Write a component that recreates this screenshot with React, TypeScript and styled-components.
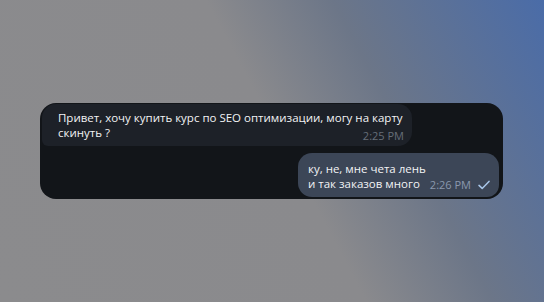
import React from 'react';
import styled, {createGlobalStyle} from 'styled-components';

const GlobalStyle = createGlobalStyle`
  html, body, #root {
    margin: 0;
    padding: 0;
    width: 100%;
    height: 100%;
  }
  body {
    font-family: 'Open Sans', 'Noto Sans', sans-serif;
    overflow: hidden;
  }
`;

const Page = styled.div`
  width: 544px;
  height: 302px;
  display: flex;
  align-items: center;
  padding-left: 40px;
  box-sizing: border-box;
  background: linear-gradient(62deg, #8b8b8d 0%, #8a8a8d 52%, #6c7688 70%, #4a6ca8 100%);
`;

const Chat = styled.div`
  width: 463px;
  box-sizing: border-box;
  display: flex;
  flex-direction: column;
  gap: 7px;
  padding: 1px 4px 2px 2px;
  background: #121519;
  border-radius: 16px;
`;

const Bubble = styled.div<{$out?: boolean}>`
  align-self: ${(p) => (p.$out ? 'flex-end' : 'flex-start')};
  width: ${(p) => (p.$out ? 'fit-content' : '370px')};
  box-sizing: border-box;
  padding: ${(p) => (p.$out ? '8px 9px 5px 10px' : '6px 8px 3px 16px')};
  background: ${(p) => (p.$out ? '#3c4657' : '#1d2128')};
  border-radius: ${(p) => (p.$out ? '14px 14px 12px 14px' : '14px 14px 14px 6px')};
  color: #f2f3f5;
  font-size: 11.5px;
  line-height: 15px;
  &::after {
    content: '';
    display: block;
    clear: both;
  }
`;

const Line = styled.span`
  white-space: pre;
`;

const Meta = styled.span<{$out?: boolean}>`
  float: right;
  display: flex;
  align-items: center;
  gap: 7px;
  margin: ${(p) => (p.$out ? '2px 0 0 10px' : '4px 0 0 12px')};
  font-size: 11px;
  line-height: 14px;
  white-space: nowrap;
  color: ${(p) => (p.$out ? '#8a98ae' : '#666e79')};
`;

const Check = () => (
  <svg width="12" height="10" viewBox="0 0 12 10" fill="none">
    <path d="M1 5.4 L4.2 8.4 L11 1.4" stroke="#a9c7ea" strokeWidth="1.5" strokeLinecap="round" strokeLinejoin="round" />
  </svg>
);

const messages = [
  {
    out: false,
    lines: ['Привет, хочу купить курс по SEO оптимизации, могу на карту', 'скинуть ?'],
    time: '2:25 PM',
  },
  {
    out: true,
    lines: ['ку, не, мне чета лень', 'и так заказов много'],
    time: '2:26 PM',
  },
];

export default function App() {
  return (
    <>
      <GlobalStyle />
      <Page>
        <Chat>
          {messages.map((m) => (
            <Bubble key={m.time} $out={m.out}>
              {m.lines.map((l, i) => (
                <React.Fragment key={i}>
                  {i > 0 && <br />}
                  <Line>{l}</Line>
                </React.Fragment>
              ))}
              <Meta $out={m.out}>
                {m.time}
                {m.out && <Check />}
              </Meta>
            </Bubble>
          ))}
        </Chat>
      </Page>
    </>
  );
}
